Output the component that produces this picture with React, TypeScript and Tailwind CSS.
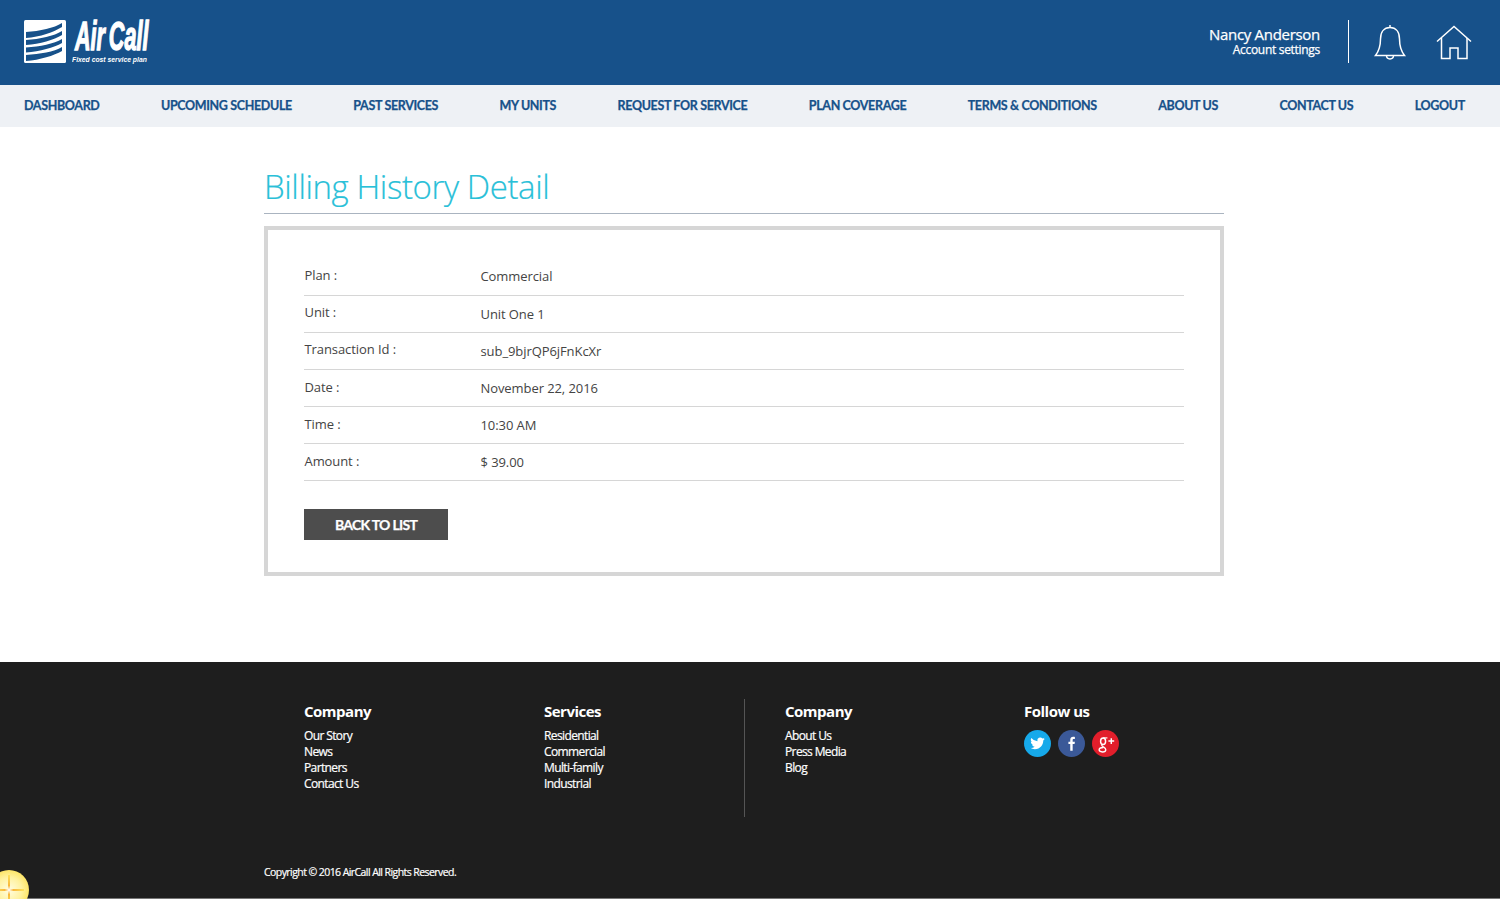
import React from "react";

const navItems = ["DASHBOARD","UPCOMING SCHEDULE","PAST SERVICES","MY UNITS","REQUEST FOR SERVICE","PLAN COVERAGE","TERMS & CONDITIONS","ABOUT US","CONTACT US","LOGOUT"];
const rows = [
  { l: "Plan :", v: "Commercial", lc: "pt-[7px]", vc: "pt-[8px]" },
  { l: "Unit :", v: "Unit One 1", lc: "pt-[7px]", vc: "pt-[9px]" },
  { l: "Transaction Id :", v: "sub_9bjrQP6jFnKcXr", lc: "pt-[7px]", vc: "pt-[9px]" },
  { l: "Date :", v: "November 22, 2016", lc: "pt-[8px]", vc: "pt-[9px]" },
  { l: "Time :", v: "10:30 AM", lc: "pt-[8px]", vc: "pt-[9px]" },
  { l: "Amount :", v: "$ 39.00", lc: "pt-[8px]", vc: "pt-[9px]" },
];
const cols = [
  { title: "Company", links: ["Our Story","News","Partners","Contact Us"], w: "w-[240px]" },
  { title: "Services", links: ["Residential","Commercial","Multi-family","Industrial"], w: "w-[200px]" },
];

const Logo = () => (
  <div className="flex items-start">
    <svg width="42" height="43" viewBox="0 0 42 43" className="mt-[20px] shrink-0">
      <rect width="42" height="43" rx="1.5" fill="#fff" />
      <g fill="#17518a">
        <path d="M2 12 C16 11 30 8 38 3 L38 7 C30 12 16 17 2 18 Z" />
        <path d="M2 20 C16 19 30 16 38 11 L38 15 C30 20 16 24 2 25 Z" />
        <path d="M2 27.5 C16 26.5 30 24 38 19 L38 23 C30 27.5 16 31.5 2 32.5 Z" />
        <path d="M2 35 C16 34 30 32 38 27 L38 31 C30 35.5 16 40 2 41 Z" />
      </g>
    </svg>
    <div className="ml-[6px] w-[80px]">
      <div className="mt-[15px] ml-[3px] h-[36px] text-white text-[40px] leading-[42px] font-bold italic origin-left scale-x-[0.54] whitespace-nowrap [-webkit-text-stroke:1.4px_white] font-['Liberation_Sans',sans-serif]">Air<span className="ml-[7px]">Call</span></div>
      <div className="mt-[4px] text-white text-[8px] leading-[10px] font-bold italic origin-left scale-x-[0.85] whitespace-nowrap font-['Liberation_Sans',sans-serif]">Fixed cost service plan</div>
    </div>
  </div>
);

export default function App() {
  return (
    <div className="relative w-full h-[899px] overflow-hidden bg-white font-['Open_Sans',sans-serif]">
      <header className="h-[85px] bg-[#17518a] flex justify-between pl-[24px] pr-[29px]">
        <Logo />
        <div className="flex items-start pt-[20px]">
          <div className="text-right text-white pt-[5px] pr-[28px] [-webkit-text-stroke:0.25px_white]">
            <div className="text-[15px] leading-[19px] tracking-[-0.3px]">Nancy Anderson</div>
            <div className="text-[12px] leading-[13px] tracking-[-0.3px] -mt-[1px]">Account settings</div>
          </div>
          <div className="w-px h-[43px] bg-white" />
          <svg width="34" height="36" viewBox="0 0 34 36" fill="none" stroke="#fff" strokeWidth="1.5" className="ml-[24px] mt-[4px]">
            <path d="M2.5 31.5 C6 27 7.5 23 7.5 15 C7.5 8 11 3.5 17 3.5 C23 3.5 26.5 8 26.5 15 C26.5 23 28 27 31.5 31.5 Z" />
            <path d="M17 1 V3.5" />
            <path d="M13.5 31.5 C13.5 36 20.5 36 20.5 31.5" />
          </svg>
          <svg width="36" height="36" viewBox="0 0 36 36" fill="none" stroke="#fff" strokeWidth="1.5" className="ml-[29px] mt-[5px] -mr-px">
            <path d="M1 16.5 L18 1.5 L35 16.5" />
            <path d="M5.5 13 V33.5 H14 V23 H22 V33.5 H31 V13" />
          </svg>
        </div>
      </header>

      <nav className="h-[42px] bg-[#eef1f5] flex items-center justify-between pl-[24px] pr-[35px]">
        {navItems.map((n) => (
          <a key={n} className="text-[#17518a] text-[12.5px] font-bold tracking-[-0.35px] whitespace-nowrap [-webkit-text-stroke:0.25px_#17518a] font-['Lato',sans-serif]">{n}</a>
        ))}
      </nav>

      <main className="w-[960px] ml-[264px] pt-[37px]">
        <h1 className="text-[#29c0d8] text-[33px] leading-[46px] font-light tracking-[-0.4px] pb-[3px] border-b border-[#aab4c0] [-webkit-text-stroke:0.2px_#29c0d8]">Billing History Detail</h1>
        <div className="mt-[12px] h-[350px] border-[4px] border-[#d6d6d6] pt-[28px] px-[36px]">
          <div className="pt-px">
            {rows.map((r) => (
              <div key={r.l} className="flex h-[37px] border-b border-[#d6d6d6] text-[13px] tracking-[-0.08px] text-[#444]">
                <div className={"w-[176.5px] pl-[0.5px] leading-[18px] " + r.lc}>{r.l}</div>
                <div className={"leading-[18px] " + r.vc}>{r.v}</div>
              </div>
            ))}
          </div>
          <button className="mt-[28px] w-[144px] h-[31px] bg-[#4d4d4d] text-white text-[14px] font-bold tracking-[-0.7px] [-webkit-text-stroke:0.25px_white] font-['Lato',sans-serif]">BACK TO LIST</button>
        </div>
      </main>

      <footer className="absolute left-0 right-0 bottom-0 h-[237px] bg-[#1e1e1e] border-b border-[#777] text-white">
        <div className="flex pl-[304px] pt-[37px]">
          {cols.map((c) => (
            <div key={c.title} className={c.w + " pt-[2px]"}>
              <div className="text-[15px] leading-[20px] font-bold tracking-[-0.5px]">{c.title}</div>
              <div className="mt-[7px]">
                {c.links.map((x) => <div key={x} className="text-[12px] leading-[16px] tracking-[-0.62px] [-webkit-text-stroke:0.2px_white]">{x}</div>)}
              </div>
            </div>
          ))}
          <div className="w-[280px] h-[118px] border-l border-[#555] pl-[40px] pt-[2px]">
            <div className="text-[15px] leading-[20px] font-bold tracking-[-0.5px]">Company</div>
            <div className="mt-[7px]">
              {["About Us","Press Media","Blog"].map((x) => <div key={x} className="text-[12px] leading-[16px] tracking-[-0.62px] [-webkit-text-stroke:0.2px_white]">{x}</div>)}
            </div>
          </div>
          <div className="pt-[2px]">
            <div className="text-[15px] leading-[20px] font-bold tracking-[-0.5px]">Follow us</div>
            <div className="flex gap-[7px] mt-[9px]">
              <svg width="27" height="27" viewBox="0 0 28 28">
                <circle cx="14" cy="14" r="14" fill="#16a9ea" />
                <path fill="#fff" d="M21.5 9.2c-.55.25-1.15.42-1.77.5.64-.38 1.12-.98 1.35-1.7-.6.35-1.25.6-1.95.74a3.07 3.07 0 0 0-5.23 2.8A8.72 8.72 0 0 1 7.56 8.3a3.07 3.07 0 0 0 .95 4.1c-.5-.02-.98-.15-1.39-.38v.04c0 1.49 1.06 2.73 2.46 3.01-.45.12-.93.14-1.39.05.4 1.22 1.53 2.11 2.87 2.14A6.17 6.17 0 0 1 6.5 18.5 8.7 8.7 0 0 0 11.2 20c5.66 0 8.76-4.69 8.76-8.76v-.4c.6-.43 1.12-.97 1.54-1.64z" />
              </svg>
              <svg width="27" height="27" viewBox="0 0 28 28">
                <circle cx="14" cy="14" r="14" fill="#3b5998" />
                <path fill="#fff" d="M15.2 21.5v-6.9h2l.3-2.5h-2.3v-1.5c0-.72.2-1.2 1.1-1.2h1.2V7.2c-.2-.03-.9-.1-1.8-.1-1.8 0-3 1.15-3 3.15v1.85h-1.9v2.5h1.9v6.9z" />
              </svg>
              <svg width="27" height="27" viewBox="0 0 28 28">
                <circle cx="14" cy="14" r="14" fill="#e21e2b" />
                <g fill="none" stroke="#fff">
                  <ellipse cx="11.5" cy="11.7" rx="2.6" ry="3.4" strokeWidth="1.5" />
                  <path strokeWidth="1.2" d="M11.5 8.2H16" />
                  <path strokeWidth="1.4" d="M10.5 15c-1 1 .2 1.8 1.6 2.7 1.4.9 2.2 1.6 2.2 2.7 0 1.4-1.4 2.4-3.5 2.4-2 0-3.4-.9-3.4-2.2 0-1.5 1.8-2.5 4.2-2.5" />
                  <path strokeWidth="1.5" d="M20 8.5v6M17 11.5h6" />
                </g>
              </svg>
            </div>
          </div>
        </div>
        <div className="absolute left-[264px] top-[203px] text-[10.5px] leading-[15px] tracking-[-0.57px] [-webkit-text-stroke:0.2px_white]">Copyright © 2016 AirCall All Rights Reserved.</div>
      </footer>

      <div className="absolute left-[-11px] top-[870px] w-[40px] h-[40px] rounded-full bg-[radial-gradient(circle,#fffde0_0%,#fff2a0_45%,#fde35e_75%,#f5c22e_100%)]">
        <div className="absolute left-[19px] top-[5px] w-[2px] h-[30px] bg-[linear-gradient(to_bottom,#fde35e,#f9b83a_35%,#fff_50%,#f9b83a_65%,#fde35e)]" />
        <div className="absolute left-[5px] top-[19px] w-[30px] h-[2px] bg-[linear-gradient(to_right,#fde35e,#f9b83a_35%,#fff_50%,#f9b83a_65%,#fde35e)]" />
      </div>
    </div>
  );
}
